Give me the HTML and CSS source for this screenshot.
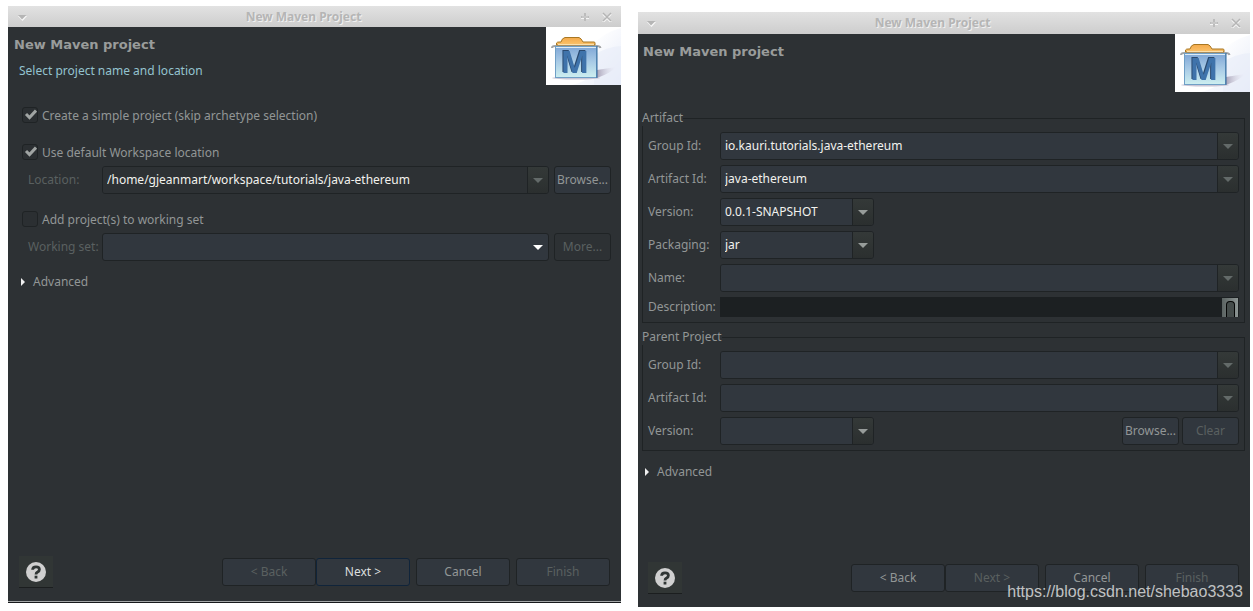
FILE: index.html
```html
<!DOCTYPE html>
<html lang="en">
<head>
<meta charset="utf-8">
<title>New Maven Project</title>
<link rel="stylesheet" href="styles.css">
</head>
<body>
<svg class="defs" aria-hidden="true">
  <defs>
    <linearGradient id="g-sky" x1="0" y1="0" x2="1" y2="1"><stop offset="0.3" stop-color="#fff"/><stop offset="1" stop-color="#e6ebf8"/></linearGradient>
    <linearGradient id="g-box" x1="0" y1="0" x2="0" y2="1"><stop offset="0" stop-color="#7fa6d6"/><stop offset="0.5" stop-color="#a9cbe6"/><stop offset="1" stop-color="#cdeff0"/></linearGradient>
    <linearGradient id="g-lid" x1="0" y1="0" x2="0" y2="1"><stop offset="0" stop-color="#f3a94a"/><stop offset="1" stop-color="#fbc36c"/></linearGradient>
    <linearGradient id="g-shade" x1="0" y1="0" x2="1" y2="0"><stop offset="0" stop-color="#a9a3b8"/><stop offset="1" stop-color="#e6e6f2" stop-opacity="0"/></linearGradient>
  </defs>
  <symbol id="maven" viewBox="0 0 75 58">
    <rect width="75" height="58" fill="#fff"/>
    <path d="M44 20Q58 5 75 1V58H26Q58 50 50 24Z" fill="url(#g-sky)"/>
    <path d="M48 28Q60 20 75 19V58H48Z" fill="#e8edf9" opacity=".6"/>
    <path d="M51 43L70 40Q65 46 51 51Z" fill="url(#g-shade)"/>
    <ellipse cx="30" cy="51" rx="24" ry="1.5" fill="#c9c6d6"/>
    <path d="M6 21Q6 19 9 19H51Q54 19 54.500 21" fill="none" stroke="#a2a4a5" stroke-width="2"/>
    <path d="M10.500 18V16Q11 15 13 15H15Q16 11 19 10.500H33Q35 11 37 15H48Q49 15 49 16V18Z" fill="url(#g-lid)" stroke="#a87722"/>
    <path d="M12 17.500H48" stroke="#fbe0ac"/>
    <rect x="9.500" y="19.500" width="41" height="31" fill="url(#g-box)" stroke="#6f9fc6"/>
    <path d="M10 20.500H50" stroke="#dcebf7"/>
    <path d="M51 19V51" stroke="#33699c"/>
  </symbol>
  <symbol id="caret" viewBox="0 0 10 5"><path d="M0 0H10L5 5Z" fill="currentColor"/></symbol>
  <symbol id="expand" viewBox="0 0 5 8"><path d="M0 0L4 4L0 8Z" fill="currentColor"/></symbol>
  <symbol id="w-menu" viewBox="0 0 10 10"><path d="M1 4H10L5.500 9Z" fill="#fafafa"/><path d="M1 3H9.500L5 7.500Z" fill="#b5b5b5"/></symbol>
  <symbol id="w-plus" viewBox="0 0 10 10"><path d="M1 6H9" stroke="#f5f5f5" stroke-width="2"/><path d="M1 5H9M5 1V9" stroke="#bcbcbc" stroke-width="2"/><path d="M2 5H8" stroke="#d4d4d4"/></symbol>
  <symbol id="w-close" viewBox="0 0 10 10"><path d="M1 2L9 10M9 2L1 10" stroke="#f5f5f5" stroke-width="2"/><path d="M1 1L9 9M9 1L1 9" stroke="#b5b5b5" stroke-width="1.500"/></symbol>
  <symbol id="help" viewBox="0 0 20 20"><circle cx="10" cy="10" r="10" fill="#d0d0d0"/><path d="M6.600 7.800Q6.700 4.800 10 4.800Q13.400 4.800 13.400 7.400Q13.400 8.900 11.600 10Q10 10.900 10 12.500" fill="none" stroke="#2f3534" stroke-width="2.800"/><rect x="8.600" y="13.700" width="2.800" height="2.800" fill="#2f3534"/></symbol>
</svg>

<main class="desktop">
  <section class="window window-first">
    <div class="titlebar">
      <button class="win-btn" aria-label="Window menu"><svg><use href="#w-menu"/></svg></button>
      <h1>New Maven Project</h1>
      <button class="win-btn" aria-label="Maximize"><svg><use href="#w-plus"/></svg></button>
      <button class="win-btn" aria-label="Close"><svg><use href="#w-close"/></svg></button>
    </div>
    <header class="banner">
      <div class="banner-text"><h2>New Maven project</h2><p>Select project name and location</p></div>
      <svg class="logo" role="img" aria-label="Maven" viewBox="0 0 75 58"><use href="#maven"/><text x="29" y="46" class="maven-m">M</text></svg>
    </header>
    <form class="content location-form">
      <label class="check"><input type="checkbox" checked><span>Create a simple project (skip archetype selection)</span></label>
      <div class="group">
        <label class="check"><input type="checkbox" checked><span>Use default Workspace location</span></label>
        <div class="row muted">
          <label for="location">Location:</label>
          <div class="combo"><input id="location" class="plain" type="text" value="/home/gjeanmart/workspace/tutorials/java-ethereum"><button type="button" class="drop dim" aria-label="Show locations"><svg><use href="#caret"/></svg></button></div>
          <button type="button" class="btn small">Browse...</button>
        </div>
      </div>
      <div class="group">
        <label class="check"><input type="checkbox"><span>Add project(s) to working set</span></label>
        <div class="row muted">
          <label for="wset">Working set:</label>
          <div class="select"><select id="wset"><option></option></select><svg><use href="#caret"/></svg></div>
          <button type="button" class="btn small flat" disabled>More...</button>
        </div>
      </div>
      <button type="button" class="advanced"><svg><use href="#expand"/></svg>Advanced</button>
    </form>
    <footer class="actions">
      <button class="help" aria-label="Help"><svg><use href="#help"/></svg></button>
      <div class="nav"><button class="btn" disabled>&lt; Back</button><button class="btn primary">Next &gt;</button></div>
      <button class="btn">Cancel</button>
      <button class="btn" disabled>Finish</button>
    </footer>
  </section>

  <section class="window window-second">
    <div class="titlebar">
      <button class="win-btn" aria-label="Window menu"><svg><use href="#w-menu"/></svg></button>
      <h1>New Maven Project</h1>
      <button class="win-btn" aria-label="Maximize"><svg><use href="#w-plus"/></svg></button>
      <button class="win-btn" aria-label="Close"><svg><use href="#w-close"/></svg></button>
    </div>
    <header class="banner">
      <div class="banner-text"><h2>New Maven project</h2></div>
      <svg class="logo" role="img" aria-label="Maven" viewBox="0 0 75 58"><use href="#maven"/><text x="29" y="46" class="maven-m">M</text></svg>
    </header>
    <form class="content artifact-form">
      <fieldset>
        <legend>Artifact</legend>
        <div class="fields">
          <label for="gid">Group Id:</label>
          <div class="combo"><input id="gid" type="text" value="io.kauri.tutorials.java-ethereum"><button type="button" class="drop dim" aria-label="Show group ids"><svg><use href="#caret"/></svg></button></div>
          <label for="aid">Artifact Id:</label>
          <div class="combo"><input id="aid" type="text" value="java-ethereum"><button type="button" class="drop dim" aria-label="Show artifact ids"><svg><use href="#caret"/></svg></button></div>
          <label for="ver">Version:</label>
          <div class="combo short"><input id="ver" type="text" value="0.0.1-SNAPSHOT"><button type="button" class="drop" aria-label="Show versions"><svg><use href="#caret"/></svg></button></div>
          <label for="pack">Packaging:</label>
          <div class="combo short"><input id="pack" type="text" value="jar"><button type="button" class="drop" aria-label="Show packagings"><svg><use href="#caret"/></svg></button></div>
          <label for="name">Name:</label>
          <div class="combo"><input id="name" type="text"><button type="button" class="drop dim" aria-label="Show names"><svg><use href="#caret"/></svg></button></div>
          <label for="desc">Description:</label>
          <div class="desc"><textarea id="desc" rows="1"></textarea><div class="scroll"><span class="thumb"></span></div></div>
        </div>
      </fieldset>
      <fieldset>
        <legend>Parent Project</legend>
        <div class="fields">
          <label for="pgid">Group Id:</label>
          <div class="combo"><input id="pgid" type="text"><button type="button" class="drop dim" aria-label="Show parent group ids"><svg><use href="#caret"/></svg></button></div>
          <label for="paid">Artifact Id:</label>
          <div class="combo"><input id="paid" type="text"><button type="button" class="drop dim" aria-label="Show parent artifact ids"><svg><use href="#caret"/></svg></button></div>
          <label for="pver">Version:</label>
          <div class="parent-version">
            <div class="combo short"><input id="pver" type="text"><button type="button" class="drop" aria-label="Show parent versions"><svg><use href="#caret"/></svg></button></div>
            <button type="button" class="btn small">Browse...</button>
            <button type="button" class="btn small" disabled>Clear</button>
          </div>
        </div>
      </fieldset>
      <button type="button" class="advanced"><svg><use href="#expand"/></svg>Advanced</button>
    </form>
    <footer class="actions">
      <button class="help" aria-label="Help"><svg><use href="#help"/></svg></button>
      <div class="nav"><button class="btn">&lt; Back</button><button class="btn" disabled>Next &gt;</button></div>
      <button class="btn">Cancel</button>
      <button class="btn" disabled>Finish</button>
    </footer>
    <p class="watermark">https://blog.csdn.net/shebao3333</p>
  </section>
</main>
</body>
</html>
```

FILE: styles.css
```css
:root {
  --bg: #2d3134;
  --field: #31373e;
  --line: #1f2325;
  --text: #929696;
  --muted: #5a6060;
}

* { box-sizing: border-box; }

body {
  margin: 0;
  background: #fff;
  color: var(--text);
  font: 12px/16px "Noto Sans", "Open Sans", sans-serif;
}

h1, h2, p { margin: 0; }

button, input, select, textarea {
  font: inherit;
  color: inherit;
  margin: 0;
  padding: 0;
}

svg { display: block; }

.defs { position: absolute; width: 0; height: 0; }

.desktop {
  display: grid;
  grid-template-columns: 613fr 612fr;
  gap: 17px;
  min-height: 100vh;
  padding: 6px 3px 4px 8px;
}

.window {
  display: flex;
  flex-direction: column;
  min-width: 0;
  background: var(--bg);
}

.window-first {
  margin-bottom: 4px;
  border-bottom: 1px solid #17191b;
}

.window-second { position: relative; margin-top: 6px; }

/* Title bar */
.titlebar {
  display: flex;
  align-items: center;
  gap: 12px;
  height: 21px;
  padding: 0 9px;
  background: linear-gradient(#e2e2e2, #cdcdcd);
}

.window-second .titlebar { height: 22px; padding-left: 8px; }

.titlebar h1 {
  flex: 1;
  text-align: center;
  font-size: 12px;
  line-height: 16px;
  color: #b5b5b5;
  text-shadow: 1px 1px 0 #f0f0f0;
}

.win-btn { width: 10px; height: 10px; border: 0; background: none; }
.win-btn svg { width: 10px; height: 10px; }

/* Banner */
.banner { display: flex; justify-content: space-between; }

.banner-text { padding: 9px 0 0 6px; }

.window-second .banner-text { padding-left: 5px; }

.banner h2 {
  font: bold 13px/18px "DejaVu Sans", sans-serif;
  color: #999c9b;
}

.banner p { padding: 9px 0 0 5px; color: #94c3cf; }

.logo { width: 75px; height: 58px; }

.maven-m {
  font: bold 30px "Noto Sans", sans-serif;
  text-anchor: middle;
  fill: #3f73ab;
  filter: drop-shadow(-1px -1px 0 #2b4a70);
}

/* Content */
.content { display: flex; flex: 1; flex-direction: column; }

.location-form { padding: 22px 10px 0 14px; gap: 21px; }

.group + .group { margin-top: -4px; }
.group + .advanced { margin-top: -8px; }

.check { display: flex; align-items: center; gap: 4px; height: 16px; }

.check span { padding-top: 2px; }

.check input {
  appearance: none;
  width: 16px;
  height: 16px;
  border: 1px solid var(--line);
  border-radius: 3px;
  background: #2b2f32;
}

.check input:checked {
  background: url("data:image/svg+xml,%3Csvg xmlns='http://www.w3.org/2000/svg' viewBox='0 0 14 14'%3E%3Cpath d='M3 6L6.500 9.500L13 2.500' fill='none' stroke='%23a0a4a3' stroke-width='3'/%3E%3C/svg%3E") #2b2f32;
}

.row {
  display: grid;
  grid-template-columns: 74px 1fr 57px;
  align-items: center;
  margin-top: 6px;
  padding-left: 6px;
}

.row > .combo, .row > .select { margin-right: 5px; }
.muted label { color: var(--muted); }

.combo {
  display: flex;
  height: 28px;
  min-width: 0;
  border: 1px solid var(--line);
  border-radius: 3px;
  overflow: hidden;
}

.combo input {
  flex: 1;
  min-width: 0;
  padding: 0 4px;
  border: 0;
  background: var(--field);
  color: #f2f2ee;
}

.combo input.plain { background: var(--bg); }

.short { width: 154px; }

.drop {
  display: grid;
  place-items: center;
  width: 21px;
  border: 0;
  border-left: 1px solid var(--line);
  background: linear-gradient(#343938, #2b2f2f);
  color: #979c9a;
}

.drop.dim { color: #636a69; }
.drop svg, .select svg { width: 10px; height: 5px; }

.select { display: grid; align-items: center; }

.select > * { grid-area: 1 / 1; }

.select select {
  appearance: none;
  width: 100%;
  height: 28px;
  padding: 0 20px 0 4px;
  border: 1px solid var(--line);
  border-radius: 3px;
  background: var(--field);
}

.select svg {
  justify-self: end;
  margin-right: 6px;
  color: #fff;
  pointer-events: none;
}

.btn {
  width: 94px;
  height: 28px;
  border: 1px solid var(--line);
  border-radius: 3px;
  background: var(--field);
  white-space: nowrap;
}

.btn:disabled { color: var(--muted); }
.btn.small { width: 57px; }
.btn.flat { background: var(--bg); }
.btn.primary { border-color: #10243a; color: #dcdfdf; }

.advanced {
  display: flex;
  align-items: center;
  align-self: flex-start;
  gap: 7px;
  height: 16px;
  border: 0;
  background: none;
}

.advanced svg { width: 5px; height: 8px; color: #f0f0f0; }

.location-form .advanced { margin-left: -1px; }

/* Artifact form */
.artifact-form { padding: 18px 5px 0 4px; }

fieldset {
  min-width: 0;
  margin: 0 0 6px;
  padding: 6px 5px 5px;
  border: 1px solid var(--line);
}

legend { margin-left: -6px; padding: 0; background: var(--bg); }

.fields {
  display: grid;
  grid-template-columns: 72px 1fr;
  align-items: center;
  gap: 5px 0;
}

.desc { display: flex; height: 20px; }

.desc textarea {
  flex: 1;
  height: 20px;
  border: 0;
  background: #1c2022;
  resize: none;
  overflow: hidden;
}

.scroll {
  width: 17px;
  padding: 3px 3px 0 4px;
  border-top: 1px solid #1c2022;
  border-right: 1px solid #1c2022;
  background: linear-gradient(90deg, #5b6362, #8d9594);
}

.thumb {
  display: block;
  height: 16px;
  border: 1px solid #050606;
  border-bottom: 0;
  border-radius: 4px 4px 0 0;
  background: #454c4b;
}

.parent-version { display: flex; gap: 3px; }
.parent-version .combo { margin-right: auto; }

.artifact-form .advanced { margin: 7px 0 0 3px; }

/* Footer */
.actions {
  display: flex;
  align-items: center;
  gap: 6px;
  padding: 0 11px 13px;
}

.window-second .actions { padding-left: 10px; }

.window-first .actions { border-bottom: 1px solid #a4a7a8; }

.nav { display: flex; }

.help {
  display: grid;
  place-items: center;
  width: 34px;
  height: 32px;
  margin-right: auto;
  border: 0;
  border-bottom: 1px solid #1b1e1f;
  background: #313635;
}

.help svg { width: 20px; height: 20px; }

/* Lies across the lower right corner of the dialog */
.watermark {
  position: absolute;
  right: 7px;
  bottom: 6px;
  font: 16px/18px "Liberation Sans", Arial, sans-serif;
  color: #c0c2c3;
  pointer-events: none;
}
```
